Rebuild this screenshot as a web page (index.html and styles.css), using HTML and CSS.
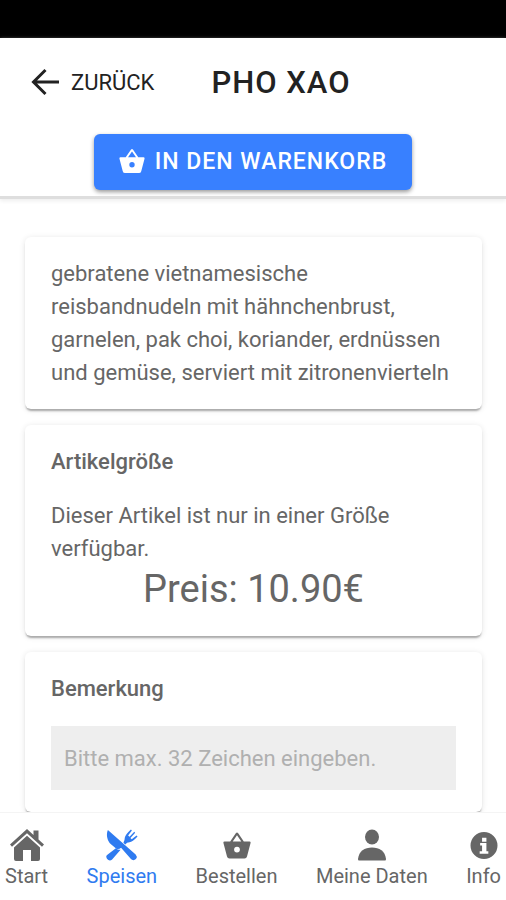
FILE: index.html
```html
<!DOCTYPE html>
<html lang="de">
<head>
<meta charset="utf-8">
<meta name="viewport" content="width=device-width, initial-scale=1">
<title>Pho Xao</title>
<link rel="stylesheet" href="styles.css">
</head>
<body>
<svg class="sprite" aria-hidden="true">
  <symbol id="basket" viewBox="0 0 28 26">
    <path fill="currentColor" fill-rule="evenodd" d="M7.200 9 12.800.8Q14 -.6 15.200.8L20.800 9H26.500Q28 9.200 27.500 10.700L24 24Q23.500 26 21.500 26H6.500Q4.500 26 4 24L.5 10.700Q0 9.200 1.500 9ZM9.700 9H18.300L14 2.800ZM14 14.200a2.900 2.900 0 1 0 0 5.800a2.900 2.900 0 1 0 0-5.800Z"/>
  </symbol>
</svg>
<div class="status-bar"></div>
<header class="header">
  <div class="toolbar">
    <button class="back" type="button">
      <svg class="back-icon" viewBox="0 0 28 28" fill="none" stroke="currentColor" stroke-width="3" aria-hidden="true"><path d="M14.500 2 2.500 14l12 12M2.500 14H28"/></svg>
      ZURÜCK
    </button>
    <h1 class="title">PHO XAO</h1>
  </div>
  <button class="cart" type="button">
    <svg class="cart-icon" aria-hidden="true"><use href="#basket"/></svg>
    IN DEN WARENKORB
  </button>
</header>
<main class="content">
  <section class="card">
    <p class="text">gebratene vietnamesische reisbandnudeln mit hähnchenbrust, garnelen, pak choi, koriander, erdnüssen und gemüse, serviert mit zitronenvierteln</p>
  </section>
  <section class="card">
    <h2 class="heading">Artikelgröße</h2>
    <p class="text">Dieser Artikel ist nur in einer Größe verfügbar.</p>
    <p class="price">Preis: 10.90€</p>
  </section>
  <section class="card">
    <label class="heading" for="note">Bemerkung</label>
    <input class="note" id="note" type="text" maxlength="32" placeholder="Bitte max. 32 Zeichen eingeben.">
  </section>
</main>
<nav class="tabs">
  <a class="tab" href="#start">
    <svg class="tab-icon" viewBox="0 0 34 32" fill="currentColor" aria-hidden="true"><path d="M17 0 0 15.500 2 17.800 17 4.300 32 17.800 34 15.500 28.500 10.500V1.500H23.500V6Z"/><path d="M17 6.800 4 18.500V30Q4 32 6 32H13V21H21V32H28Q30 32 30 30V18.500Z"/></svg>
    Start
  </a>
  <a class="tab tab-active" href="#speisen">
    <svg class="tab-icon" viewBox="0 0 34 34" fill="currentColor" aria-hidden="true"><path d="M2 1C-.5 7 2 13 5 16L11 21Q14 22 16 20L26.500 32Q28.500 34 31 32.500L32 31.500Q33.500 29 31.500 27Z"/><path d="M.8 28 10.500 20.500Q13 22.500 15.500 22L6.500 32.500Q4.500 34 2.500 33L1 31.500Q-.5 29.500.8 28ZM18.500 14.500Q20 12 20 9Q20.500 6 26.500.5L27.500 1.500 23.500 7 25 8.300 30 3 31 4 26 9.500 27.300 10.800 32.500 6.800 33.500 8Q28 14 25 14Q22 14 20.500 16.500Z"/></svg>
    Speisen
  </a>
  <a class="tab" href="#bestellen">
    <svg class="tab-icon tab-basket" aria-hidden="true"><use href="#basket"/></svg>
    Bestellen
  </a>
  <a class="tab" href="#daten">
    <svg class="tab-icon" viewBox="0 0 30 32" fill="currentColor" aria-hidden="true"><ellipse cx="15" cy="8" rx="7" ry="7.500"/><path d="M2 31.500Q1 31.500 1 30C2 22 7.500 18.500 15 18.500S28 22 29 30Q29 31.500 28 31.500Z"/></svg>
    Meine Daten
  </a>
  <a class="tab" href="#info">
    <svg class="tab-icon tab-round" viewBox="0 0 28 28" fill="currentColor" aria-hidden="true"><path fill-rule="evenodd" d="M14 0a14 14 0 1 0 0 28a14 14 0 1 0 0-28ZM12 6h4.500v4H12ZM10 11.500h6.500v8.500h2v2.500h-9V20h2.500v-6H10Z"/></svg>
    Info
  </a>
</nav>
</body>
</html>
```
FILE: styles.css
```css
* {
  box-sizing: border-box;
}

body {
  margin: 0;
  height: 100vh;
  display: flex;
  flex-direction: column;
  background: #fff;
  color: #666;
  font-family: Roboto, "Liberation Sans", sans-serif;
  font-size: 22px;
  line-height: 33px;
}

h1, h2, p {
  margin: 0;
}

button, input {
  font: inherit;
  border: 0;
}

.sprite {
  position: absolute;
  width: 0;
  height: 0;
}

.status-bar {
  flex: none;
  height: 38px;
  background: #000;
}

.header {
  flex: none;
  display: flex;
  flex-direction: column;
  align-items: center;
  padding-bottom: 6px;
  border-bottom: 3px solid #dedede;
  box-shadow: 0 2px 4px #eee;
}

.toolbar {
  align-self: stretch;
  display: flex;
  align-items: center;
  gap: 57px;
  height: 88px;
  padding: 0 31px;
  margin-bottom: 8px;
}

.back {
  display: flex;
  align-items: center;
  gap: 12px;
  padding: 0;
  background: none;
  color: #222;
}

.back-icon {
  width: 28px;
  height: 28px;
}

.title {
  color: #222;
  font-size: 31px;
  font-weight: 500;
  letter-spacing: 1px;
}

.cart {
  display: flex;
  align-items: center;
  gap: 10px;
  height: 56px;
  padding: 0 25px 2px;
  border-radius: 6px;
  background: #3880ff;
  box-shadow: 0 2px 4px #999;
  color: #fff;
  font-size: 23px;
  font-weight: 500;
  letter-spacing: 1px;
}

.cart-icon {
  width: 26px;
  height: 24px;
}

.content {
  flex: 1;
  min-height: 0;
  overflow: auto;
  scrollbar-width: none;
  display: flex;
  flex-direction: column;
  gap: 16px;
  padding: 38px 24px 0 25px;
}

.card {
  flex: none;
  padding: 20px 26px;
  border-radius: 6px;
  box-shadow: 0 3px 2px -1px #aaa, 0 1px 6px #e4e4e4;
}

.heading {
  display: block;
  margin-bottom: 21px;
  font-size: 22px;
  font-weight: 500;
}

.price {
  padding: 2px 0 4px;
  font-size: 38px;
  line-height: 45px;
  text-align: center;
}

.note {
  display: block;
  width: 100%;
  height: 64px;
  margin-bottom: 2px;
  padding: 0 13px;
  background: #eee;
  color: #666;
}

.note::placeholder {
  color: #b0b0b0;
  opacity: 1;
}

.tabs {
  flex: none;
  display: flex;
  justify-content: space-between;
  height: 88px;
  padding: 16px 5px 0;
  border-top: 1px solid #f4f4f4;
  background: #fff;
}

.tab {
  display: flex;
  flex-direction: column;
  align-items: center;
  color: #666;
  font-size: 20px;
  line-height: 31px;
  text-decoration: none;
}

.tab-active {
  color: #2f7bf0;
}

.tab-icon {
  width: 34px;
  height: 32px;
}

.tab-basket,
.tab-round {
  height: 27px;
  margin: 3px 0 2px;
}

.tab-basket {
  width: 28px;
}
```
